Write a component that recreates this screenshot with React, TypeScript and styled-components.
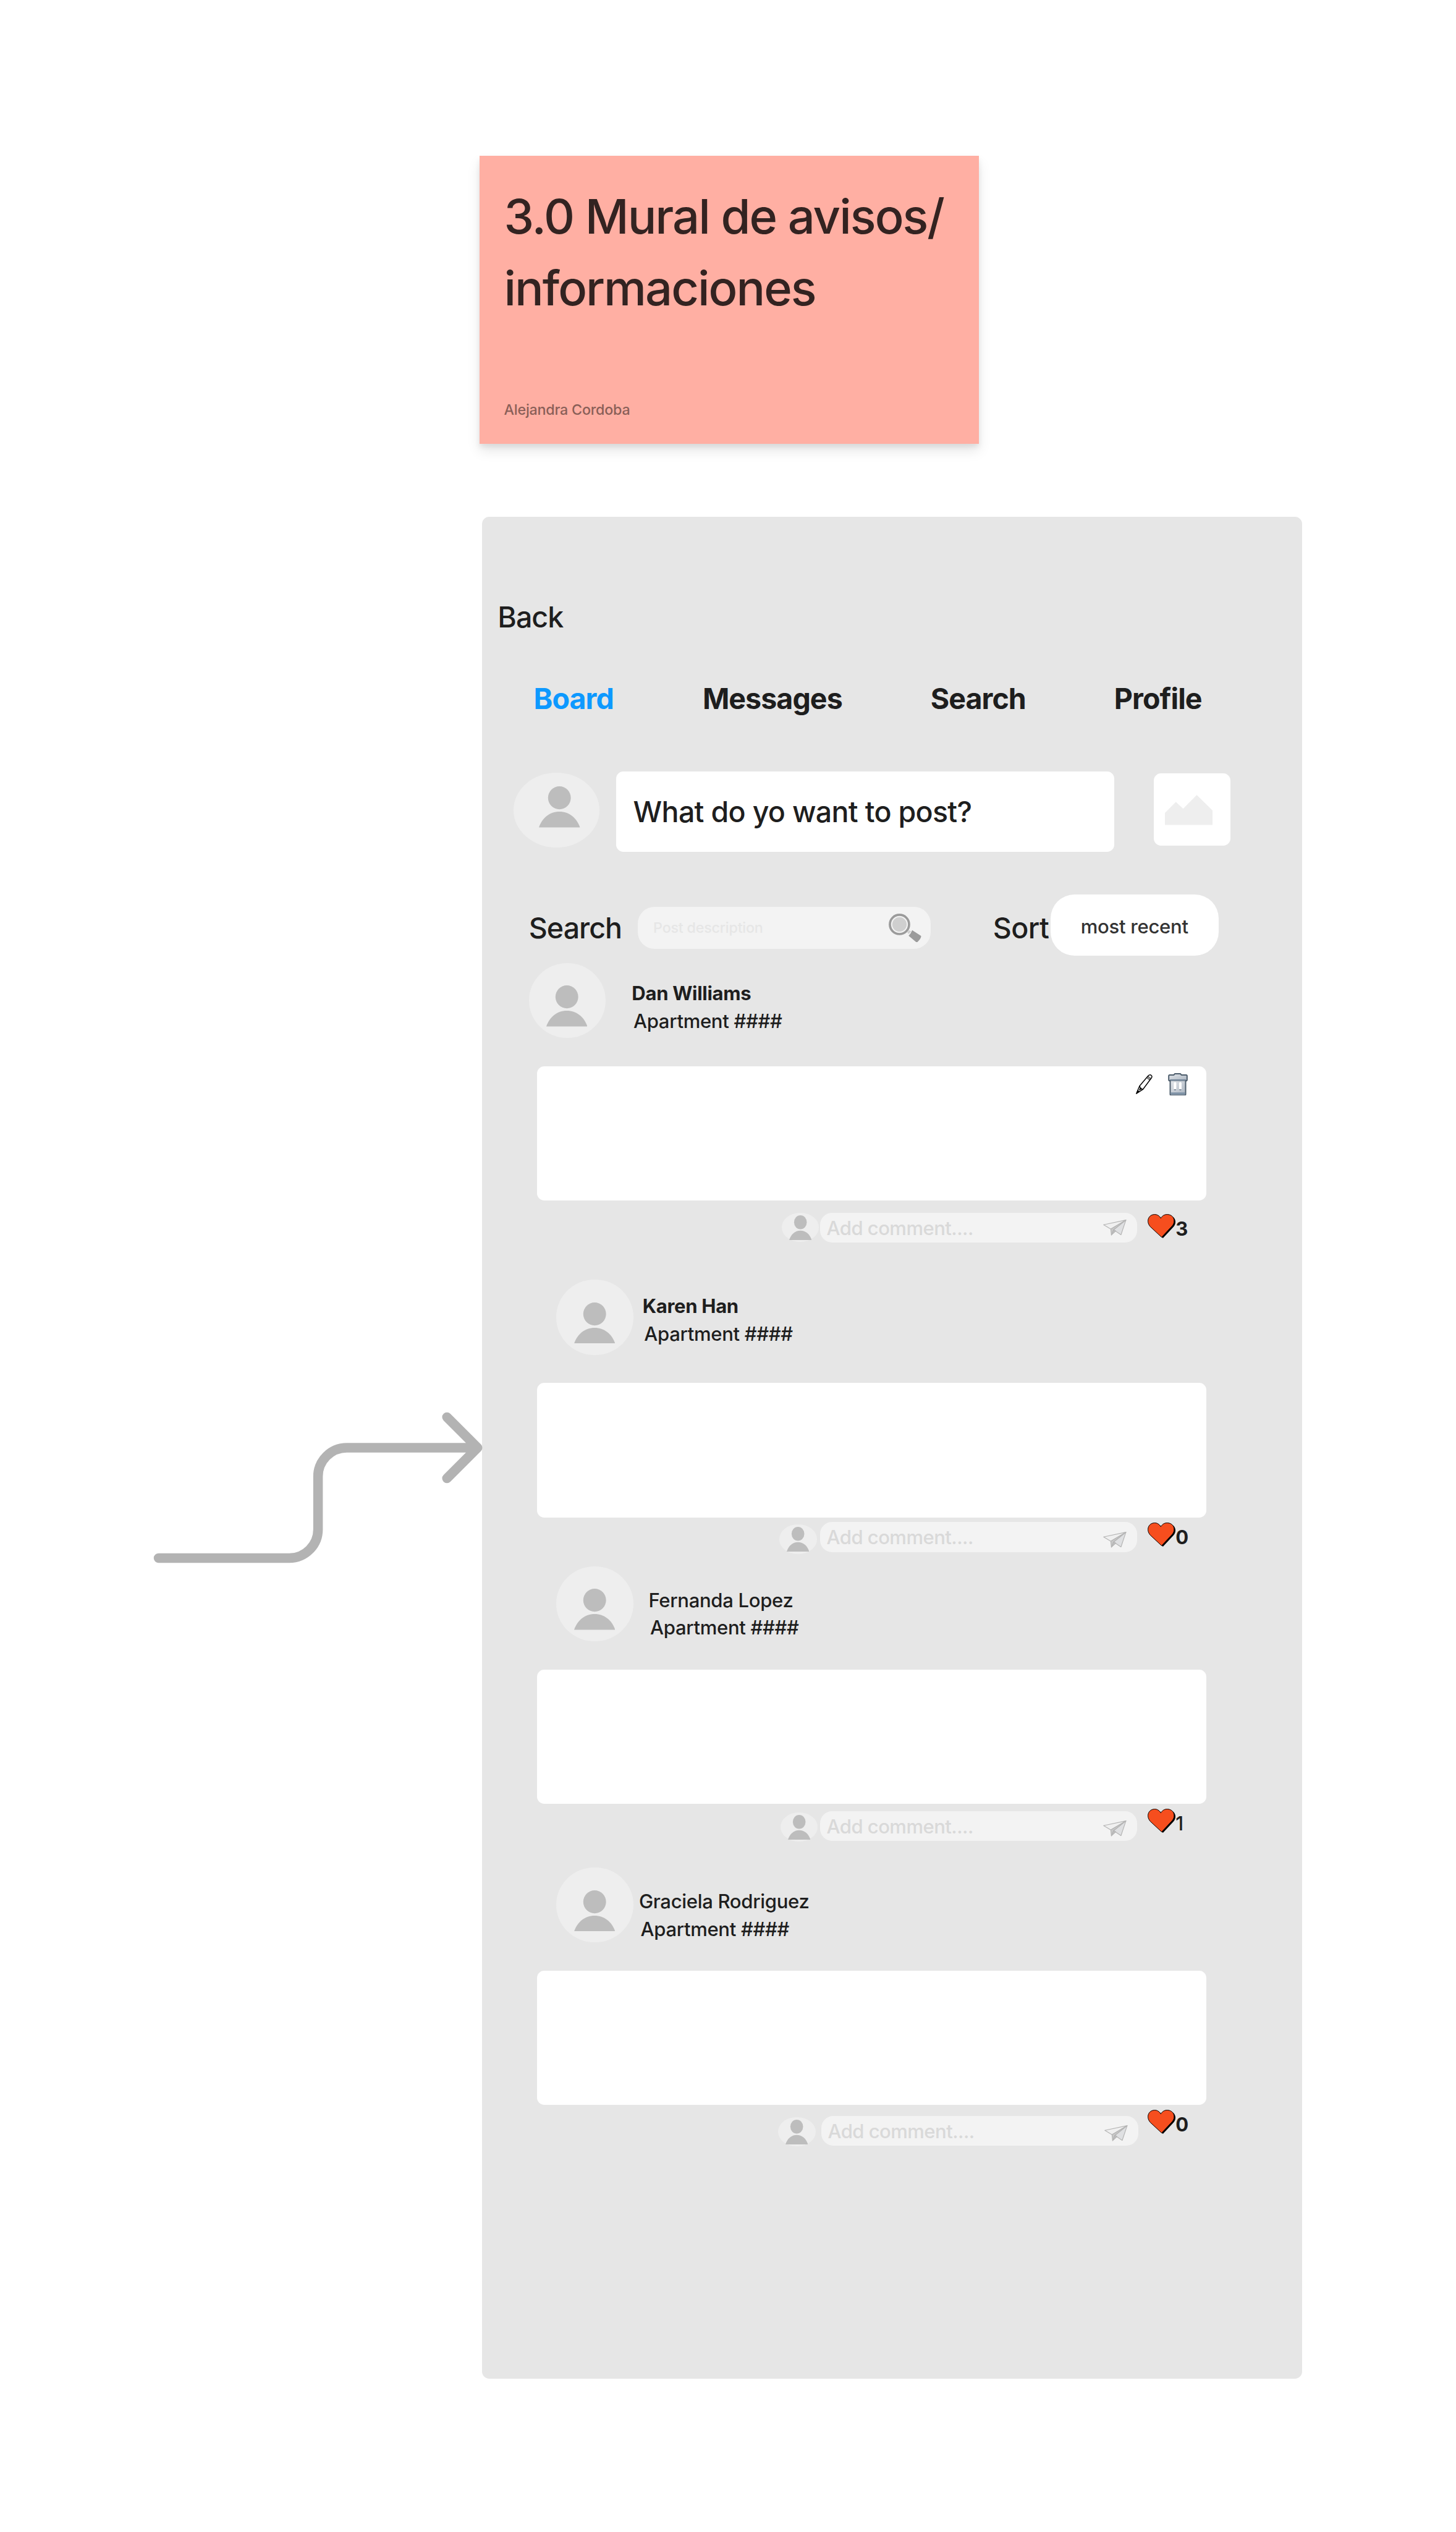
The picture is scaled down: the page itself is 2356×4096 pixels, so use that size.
import React from "react";
import styled, { createGlobalStyle } from "styled-components";

/* Board units are converted to screen pixels with one common factor. */
const SCALE = 0.9703;
const u = (n: number) => `${(n * SCALE).toFixed(2)}px`;

const GlobalStyle = createGlobalStyle`
  html, body { margin: 0; padding: 0; background: #fff; }
  body { font-family: Inter, "Liberation Sans", sans-serif; font-weight: 500; color: #1e1e1e; }
  *, *::before, *::after { box-sizing: border-box; }
  svg { display: block; flex: none; }
`;

const Canvas = styled.main`
  position: relative;
  width: 2356px;
  height: 4096px;
  overflow: hidden;
  background: #fff;
  display: flex;
  flex-direction: column;
  align-items: flex-start;
  padding: ${u(260)} 0 0 ${u(800)};
`;

const Sticky = styled.section`
  width: ${u(832)};
  height: ${u(480)};
  flex: none;
  background: #ffafa3;
  display: flex;
  flex-direction: column;
  justify-content: space-between;
  padding: ${u(41)} ${u(24)} ${u(42.3)} ${u(40.5)};
  box-shadow: 0 ${u(5)} ${u(8)} rgba(0, 0, 0, 0.07), 0 ${u(12)} ${u(20)} rgba(0, 0, 0, 0.1);
`;

const StickyTitle = styled.h1`
  margin: 0;
  font-size: ${u(80)};
  line-height: ${u(120)};
  font-weight: 500;
  letter-spacing: -0.0255em;
  color: #332321;
  white-space: nowrap;
`;

const StickyAuthor = styled.span`
  font-size: ${u(24)};
  line-height: ${u(30)};
  letter-spacing: -0.01em;
  color: #8a5f58;
`;

const ConnectorArrow = styled.svg`
  position: absolute;
  left: ${u(248)};
  top: ${u(2346)};
`;

const Phone = styled.section`
  margin: ${u(122)} 0 0 ${u(4)};
  width: ${u(1368)};
  height: ${u(3104)};
  flex: none;
  background: #e6e6e6;
  border-radius: ${u(12)};
  padding-top: ${u(138)};
`;

const BackLink = styled.a`
  display: block;
  padding-left: ${u(26)};
  font-size: ${u(48)};
  line-height: ${u(58)};
  letter-spacing: -0.022em;
`;

const Tabs = styled.nav`
  display: grid;
  grid-template-columns: ${u(281.7)} ${u(380.1)} ${u(306.3)} auto;
  margin-top: ${u(77.3)};
  padding-left: ${u(86)};
`;

const Tab = styled.a<{ $active?: boolean }>`
  font-size: ${u(48)};
  line-height: ${u(58)};
  font-weight: 700;
  letter-spacing: -0.0205em;
  color: ${(p) => (p.$active ? "#0d99ff" : "#1e1e1e")};
`;

const Composer = styled.div`
  display: flex;
  align-items: flex-start;
  margin-top: ${u(92.5)};
  padding-left: ${u(52)};
  height: ${u(134)};
`;

const AvatarDisc = styled.div<{ $w: number; $h: number; $left: number; $top: number }>`
  flex: none;
  width: ${(p) => u(p.$w)};
  height: ${(p) => u(p.$h)};
  border-radius: 50%;
  background: #eee;
  padding: ${(p) => `${u(p.$top)} 0 0 ${u(p.$left)}`};
`;

const ComposerAvatar = styled.div`
  margin: ${u(2)} ${u(28)} 0 0;
`;

const PostInput = styled.div`
  width: ${u(830)};
  height: ${u(134)};
  border-radius: ${u(12)};
  background: #fff;
  display: flex;
  align-items: center;
  padding: ${u(1)} 0 0 ${u(28)};
  font-size: ${u(48)};
  line-height: ${u(58)};
  letter-spacing: -0.0152em;
`;

const AttachButton = styled.div`
  width: ${u(128)};
  height: ${u(120)};
  margin: ${u(4)} 0 0 ${u(66)};
  padding: ${u(36)} 0 0 ${u(18.5)};
  border-radius: ${u(12)};
  background: #fff;
`;

const Filters = styled.div`
  display: grid;
  grid-template-columns: ${u(182)} ${u(592)} ${u(96)} ${u(280)};
  margin-top: ${u(72)};
  padding-left: ${u(78)};
  height: ${u(102)};
  align-items: start;
`;

const FilterLabel = styled.span`
  margin-top: ${u(26)};
  font-size: ${u(48)};
  line-height: ${u(58)};
  letter-spacing: -0.0215em;
`;

const SortLabel = styled(FilterLabel)`
  letter-spacing: -0.013em;
`;

const SearchField = styled.div`
  width: ${u(488)};
  margin-top: ${u(20)};
  height: ${u(70)};
  border-radius: ${u(28)};
  background: #f3f3f3;
  display: flex;
  align-items: center;
  justify-content: space-between;
  padding: 0 ${u(15)} 0 ${u(25.5)};
  font-size: ${u(24)};
  letter-spacing: -0.0092em;
  color: #e6e6e6;
`;

const SortPill = styled.div`
  height: ${u(102)};
  border-radius: ${u(40)};
  background: #fff;
  display: flex;
  align-items: center;
  justify-content: center;
  padding-top: ${u(2.6)};
  font-size: ${u(32)};
  letter-spacing: -0.0087em;
  color: #333;
`;

const Feed = styled.div`
  padding-top: ${u(12)};
`;

const PostHeader = styled.header<{ $indent: number }>`
  display: flex;
  align-items: flex-start;
  height: ${u(172)};
  padding-left: ${(p) => u(p.$indent)};
`;

const Byline = styled.div<{ $x: number; $y: number }>`
  display: flex;
  flex-direction: column;
  margin: ${(p) => `${u(p.$y)} 0 0 ${u(p.$x)}`};
  font-size: ${u(32)};
  line-height: ${u(46)};
  letter-spacing: -0.0102em;
  white-space: nowrap;
`;

const AuthorName = styled.span<{ $bold: boolean }>`
  font-weight: ${(p) => (p.$bold ? 700 : 500)};
`;

const Apartment = styled.span`
  padding-left: ${u(2.7)};
`;

const PostCard = styled.div`
  width: ${u(1116)};
  height: ${u(224)};
  margin-left: ${u(92)};
  border-radius: ${u(12)};
  background: #fff;
  display: flex;
  justify-content: flex-end;
  align-items: flex-start;
  gap: ${u(25)};
  padding: ${u(11)} ${u(31.5)} 0 0;
`;

const EditAction = styled.span`
  margin-top: ${u(2.5)};
`;

const PostFooter = styled.footer<{ $height: number }>`
  display: flex;
  align-items: flex-start;
  height: ${(p) => u(p.$height)};
`;

const CommentAvatar = styled.div<{ $x: number; $y: number; $gap: number }>`
  margin: ${(p) => `${u(p.$y)} ${u(p.$gap)} 0 ${u(p.$x)}`};
`;

const CommentField = styled.div<{ $y: number; $planeDrop: number }>`
  width: ${u(528)};
  height: ${u(50)};
  margin-top: ${(p) => u(p.$y)};
  border-radius: ${u(20)};
  background: #f3f3f3;
  display: flex;
  justify-content: space-between;
  padding: 0 ${u(17)} 0 ${u(10.5)};
  font-size: ${u(32)};
  line-height: ${u(50.6)};
  letter-spacing: -0.0175em;
  color: #d9d9d9;

  svg { margin-top: ${(p) => u(p.$planeDrop)}; }
`;

const Likes = styled.div<{ $x: number; $y: number; $bold: boolean }>`
  display: flex;
  align-items: flex-start;
  margin: ${(p) => `${u(p.$y)} 0 0 ${u(p.$x)}`};
  font-size: ${u(32)};
  line-height: ${u(50)};
  font-weight: ${(p) => (p.$bold ? 700 : 500)};
`;

const Person = ({ w, h, rx, ry, bodyTop }: { w: number; h: number; rx: number; ry: number; bodyTop: number }) => (
  <svg width={w * SCALE} height={h * SCALE} viewBox={`0 0 ${w} ${h}`}>
    <ellipse cx={w / 2} cy={ry} rx={rx} ry={ry} fill="#bdbdbd" />
    <path
      d={`M0 ${h}C${w * 0.08} ${h - (h - bodyTop) * 0.6} ${w * 0.26} ${bodyTop} ${w / 2} ${bodyTop}C${w * 0.74} ${bodyTop} ${w * 0.92} ${h - (h - bodyTop) * 0.6} ${w} ${h}Z`}
      fill="#bdbdbd"
    />
  </svg>
);

const Avatar = ({ wide }: { wide?: boolean }) => (
  <AvatarDisc $w={wide ? 144 : 128} $h={125} $left={wide ? 43 : 29} $top={wide ? 23.5 : 37.5}>
    <Person w={68.5} h={68.5} rx={19} ry={19.2} bodyTop={42.3} />
  </AvatarDisc>
);

const SmallAvatar = () => (
  <AvatarDisc $w={62} $h={49} $left={11.8} $top={4}>
    <Person w={37.5} h={41.2} rx={10.6} ry={11.6} bodyTop={25.6} />
  </AvatarDisc>
);

const MountainIcon = () => (
  <svg width={80 * SCALE} height={50 * SCALE} viewBox="0 0 80 50">
    <path d="M0 30L18.3 11.7L30.4 23L53.1 0L80 26.3V50H0Z" fill="#eee" />
  </svg>
);

const MagnifierIcon = () => (
  <svg width={55 * SCALE} height={48 * SCALE} viewBox="0 0 55 48">
    <circle cx="18" cy="18" r="16" fill="#f3f3f3" stroke="#9b9b9b" strokeWidth="3.8" />
    <circle cx="18" cy="18" r="12" fill="#cfcfcf" />
    <path d="M31 31.3L34 27.5L37.4 29.5L33.5 34Z" fill="#cfcfcf" />
    <path d="M39.2 27.5L54 37.2Q54.8 41 47.5 47.8H46.2L33.2 36.8Q37 33.5 39.2 27.5Z" fill="#9b9b9b" />
  </svg>
);

const PencilIcon = () => (
  <svg width={28 * SCALE} height={33 * SCALE} viewBox="0 0 28 33">
    <path
      d="M.8 32L6.2 19.3L20.6 2.4C22 .6 24.2 .4 25.6 1.6C27 2.8 27 4.6 25.8 6.2L11.6 25.2Z"
      fill="#fff"
      stroke="#000"
      strokeWidth="1.5"
      strokeLinejoin="round"
    />
    <path d="M6.2 19.5C7.2 20.4 7.6 21.4 7 23C8.8 22.4 9.6 23 9 24.8C10.2 24.2 11 24.4 11.4 25.2" fill="none" stroke="#000" strokeWidth="1.3" />
    <path d="M.5 32.3L3.2 26L6.4 28.8Z" fill="#000" />
    <path d="M17.9 5.6L23.2 9.8M19 4.3L24.3 8.4M20.1 3L25.3 7" stroke="#000" strokeWidth="1" />
    <path d="M6 25.8L8 24" stroke="#000" strokeWidth="1.8" strokeLinecap="round" />
  </svg>
);

const TrashIcon = () => (
  <svg width={33 * SCALE} height={38 * SCALE} viewBox="0 0 33 38">
    <defs>
      <linearGradient id="bin" x1="0" y1="0" x2="1" y2="1">
        <stop offset="0" stopColor="#e4e7eb" />
        <stop offset="1" stopColor="#a9b3bf" />
      </linearGradient>
    </defs>
    <path d="M3.6 12H29.4V35Q29.4 37 27.4 37H5.6Q3.6 37 3.6 35Z" fill="url(#bin)" stroke="#4c5c6b" strokeWidth="2" />
    <path d="M4.6 32.2H28.4V35.8H4.6Z" fill="#7e92a6" />
    <path d="M2.8 3H9.8L11.4 1H20.6L22.2 3H30.2Q31.8 3 31.8 4.6V11.2Q31.8 13 30 13L28.6 11.6H4.4L3 13Q1.2 13 1.2 11.2V4.6Q1.2 3 2.8 3Z" fill="url(#bin)" stroke="#4c5c6b" strokeWidth="2" strokeLinejoin="round" />
    <path d="M4 11.6H29" stroke="#7e92a6" strokeWidth="2" />
    <path d="M9.6 16.5Q11.7 13.5 13.8 16.5V27Q11.7 31.5 9.6 27ZM18.4 16.5Q20.5 13.5 22.6 16.5V27Q20.5 31.5 18.4 27Z" fill="#fff" />
    <path d="M9.6 26.8H13.8Q13.4 29.2 11.7 29.2Q10 29.2 9.6 26.8ZM18.4 26.8H22.6Q22.2 29.2 20.5 29.2Q18.8 29.2 18.4 26.8Z" fill="#7e8c9b" />
  </svg>
);

const PlaneIcon = () => (
  <svg width={39 * SCALE} height={27 * SCALE} viewBox="0 0 39 27">
    <g stroke="#b4b4b4" strokeWidth="1.2" strokeLinejoin="round">
      <path d="M.8 8.5L38 .7L12.8 15.8Z" fill="#f0f0f0" />
      <path d="M12.8 15.8L38 .7L17.6 17L13.8 25.6Z" fill="#c9c9c9" />
      <path d="M17.6 17L38 .7L29.8 25.2Z" fill="#dfe0e2" />
      <path d="M17.6 17L21 18.8L13.8 25.6Z" fill="#c0c0c0" />
    </g>
  </svg>
);

const HEART =
  "M22 7C19.5 2.6 15.8.6 11.8.6C5.2.6.6 5.4.6 11.6C.6 15.2 1.9 18 4.4 21L23.3 38.6L40.2 20.6C42.7 18 44.2 15.2 44.2 11.4C44.2 5.2 39.6.6 32.6.6C28.2.6 24.5 2.6 22 7Z";

const HeartIcon = () => (
  <svg width={46.5 * SCALE} height={42 * SCALE} viewBox="0 0 46.5 42">
    <path d={HEART} transform="translate(2.2 1.6)" fill="#000" />
    <path d={HEART} fill="#f64e1e" stroke="#000" strokeWidth="1" />
  </svg>
);

type PostData = {
  name: string;
  likes: number;
  boldName: boolean;
  boldLikes: boolean;
  indent: number;
  byline: [number, number];
  avatar: [number, number];
  fieldX: number;
  fieldY: number;
  planeDrop: number;
  heartY: number;
  tail: number;
  own?: boolean;
};

const posts: PostData[] = [
  { name: "Dan Williams", likes: 3, boldName: true, boldLikes: true, indent: 78, byline: [43.7, 27.7], avatar: [500, 20], fieldX: 564, fieldY: 20, planeDrop: 12, heartY: 21.9, tail: 132, own: true },
  { name: "Karen Han", likes: 0, boldName: true, boldLikes: true, indent: 124, byline: [15.6, 21.8], avatar: [496, 12], fieldX: 564, fieldY: 8, planeDrop: 16, heartY: 8.4, tail: 82 },
  { name: "Fernanda Lopez", likes: 1, boldName: false, boldLikes: false, indent: 124, byline: [25.6, 33.5], avatar: [498, 14], fieldX: 564, fieldY: 12, planeDrop: 16, heartY: 8, tail: 106 },
  { name: "Graciela Rodriguez", likes: 0, boldName: false, boldLikes: true, indent: 124, byline: [9.6, 34], avatar: [494, 20], fieldX: 566, fieldY: 18, planeDrop: 16, heartY: 8, tail: 104 },
];

const Post = ({ post }: { post: PostData }) => (
  <article>
    <PostHeader $indent={post.indent}>
      <Avatar />
      <Byline $x={post.byline[0]} $y={post.byline[1]}>
        <AuthorName $bold={post.boldName}>{post.name}</AuthorName>
        <Apartment>Apartment ####</Apartment>
      </Byline>
    </PostHeader>
    <PostCard>
      {post.own && (
        <>
          <EditAction>
            <PencilIcon />
          </EditAction>
          <TrashIcon />
        </>
      )}
    </PostCard>
    <PostFooter $height={post.tail}>
      <CommentAvatar $x={post.avatar[0]} $y={post.avatar[1]} $gap={post.fieldX - post.avatar[0] - 62}>
        <SmallAvatar />
      </CommentAvatar>
      <CommentField $y={post.fieldY} $planeDrop={post.planeDrop}>
        Add comment....
        <PlaneIcon />
      </CommentField>
      <Likes $x={1110 - post.fieldX - 528} $y={post.heartY} $bold={post.boldLikes}>
        <HeartIcon />
        {post.likes}
      </Likes>
    </PostFooter>
  </article>
);

export default function App() {
  return (
    <>
      <GlobalStyle />
      <Canvas>
        <Sticky>
          <StickyTitle>
            3.0 Mural de avisos/
            <br />
            informaciones
          </StickyTitle>
          <StickyAuthor>Alejandra Cordoba</StickyAuthor>
        </Sticky>

        <Phone>
          <BackLink>Back</BackLink>
          <Tabs>
            <Tab $active>Board</Tab>
            <Tab>Messages</Tab>
            <Tab>Search</Tab>
            <Tab>Profile</Tab>
          </Tabs>
          <Composer>
            <ComposerAvatar>
              <Avatar wide />
            </ComposerAvatar>
            <PostInput>What do yo want to post?</PostInput>
            <AttachButton>
              <MountainIcon />
            </AttachButton>
          </Composer>
          <Filters>
            <FilterLabel>Search</FilterLabel>
            <SearchField>
              Post description
              <MagnifierIcon />
            </SearchField>
            <SortLabel>Sort</SortLabel>
            <SortPill>most recent</SortPill>
          </Filters>
          <Feed>
            {posts.map((post) => (
              <Post key={post.name} post={post} />
            ))}
          </Feed>
        </Phone>

        <ConnectorArrow width={566 * SCALE} height={270 * SCALE} viewBox="248 2346 566 270">
          <path
            d="M264 2598H482A48 48 0 0 0 530 2550V2462A48 48 0 0 1 578 2414H796M745 2363L796 2414L745 2465"
            fill="none"
            stroke="#b3b3b3"
            strokeWidth="16"
            strokeLinecap="round"
            strokeLinejoin="round"
          />
        </ConnectorArrow>
      </Canvas>
    </>
  );
}
